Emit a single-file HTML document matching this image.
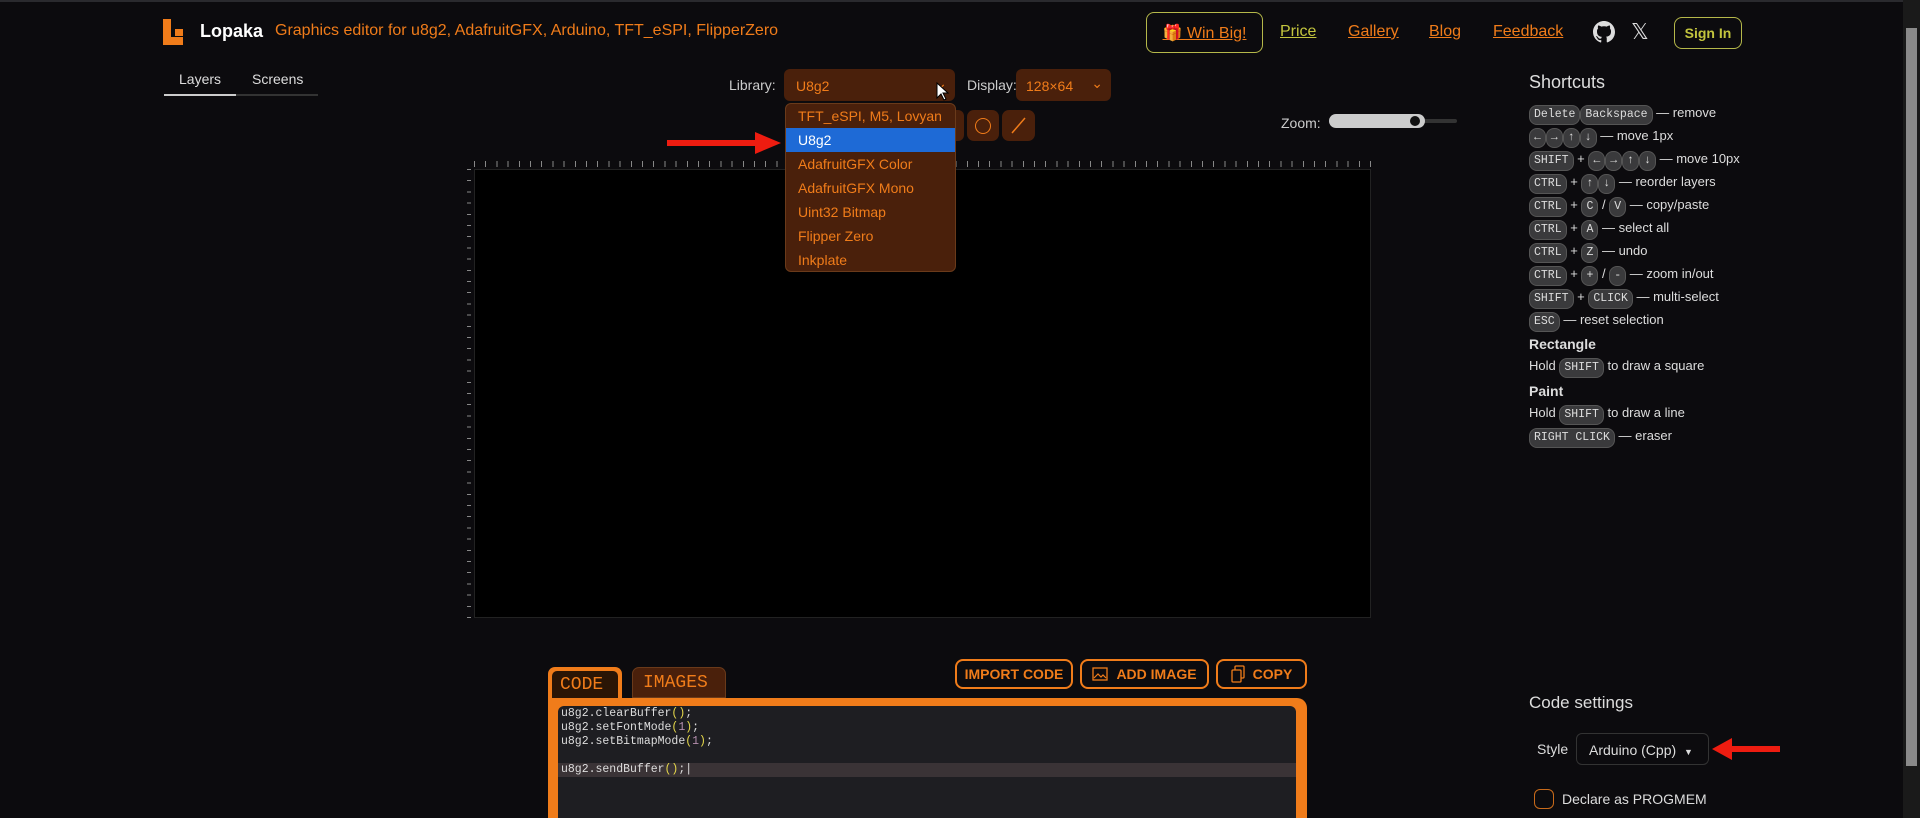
<!DOCTYPE html>
<html style="overflow:hidden;height:818px"><head><meta charset="utf-8"><style>
*{box-sizing:border-box;margin:0;padding:0}
body{width:1920px;height:818px;background:#0c0b0e;font-family:"Liberation Sans",sans-serif;color:#ddd;position:relative;overflow:hidden}
.a{position:absolute}
.or{color:#f07c1a}
a{color:#f07c1a;text-decoration:underline}
.kb{display:inline-block;font-family:"Liberation Mono",monospace;font-size:11.5px;background:#3a3a3c;border:1px solid #555;border-radius:8px;padding:2px 4px;color:#ddd;line-height:14px}
.row{position:absolute;left:1529px;font-size:13px;color:#ddd;white-space:nowrap}
.dd div{height:24px;line-height:24px;padding-left:12px;color:#f07c1a;font-size:14px}
.btn{position:absolute;border:2px solid #f07c1a;border-radius:8px;color:#f07c1a;font-weight:bold;font-size:14px;display:flex;align-items:center;justify-content:center;gap:8px;background:#0c0b0e}
</style></head><body>
<div class="a" style="left:0;top:0;width:1920px;height:2px;background:#2a2a2e"></div>
<div class="a" style="left:1903px;top:0;width:17px;height:818px;background:#1a1a1a"></div>
<div class="a" style="left:1906px;top:28px;width:11px;height:738px;background:#8a8a8a"></div>
<svg class="a" style="left:163px;top:19px" width="26" height="26"><rect x="0" y="0" width="8" height="26" fill="#f07c1a"/><rect x="0" y="18" width="20" height="8" fill="#f07c1a"/><rect x="12" y="10" width="8" height="7" fill="#f07c1a"/></svg>
<div class="a" style="left:200px;top:21px;font-size:18px;font-weight:bold;color:#fff">Lopaka</div>
<div class="a or" style="left:275px;top:22px;font-size:16px">Graphics editor for u8g2, AdafruitGFX, Arduino, TFT_eSPI, FlipperZero</div>
<div class="a" style="left:1146px;top:12px;width:117px;height:41px;border:1.5px solid #b5b84a;border-radius:8px;display:flex;align-items:center;justify-content:center;font-size:16px"><a>🎁 Win Big!</a></div>
<a class="a" style="left:1280px;top:23px;font-size:16px;color:#c3c53e">Price</a>
<a class="a" style="left:1348px;top:23px;font-size:16px">Gallery</a>
<a class="a" style="left:1429px;top:23px;font-size:16px">Blog</a>
<a class="a" style="left:1493px;top:23px;font-size:16px">Feedback</a>
<svg class="a" style="left:1593px;top:21px" width="22" height="22" viewBox="0 0 16 16"><path fill="#ddd" d="M8 0C3.6 0 0 3.6 0 8c0 3.5 2.3 6.5 5.5 7.6.4.1.5-.2.5-.4v-1.4c-2.2.5-2.7-1-2.7-1-.4-.9-.9-1.2-.9-1.2-.7-.5.1-.5.1-.5.8.1 1.2.8 1.2.8.7 1.3 1.9.9 2.3.7.1-.5.3-.9.5-1.1-1.8-.2-3.6-.9-3.6-4 0-.9.3-1.6.8-2.1-.1-.2-.4-1 .1-2.1 0 0 .7-.2 2.2.8.6-.2 1.3-.3 2-.3s1.4.1 2 .3c1.5-1 2.2-.8 2.2-.8.4 1.1.2 1.9.1 2.1.5.6.8 1.3.8 2.1 0 3.1-1.9 3.7-3.6 3.9.3.3.5.8.5 1.5v2.2c0 .2.1.5.6.4C13.7 14.5 16 11.5 16 8c0-4.4-3.6-8-8-8z"/></svg>
<div class="a" style="left:1631px;top:19px;font-size:22px;color:#ddd">𝕏</div>
<div class="a" style="left:1674px;top:17px;width:68px;height:32px;border:1.5px solid #b5b84a;border-radius:8px;color:#c3c53e;font-weight:bold;font-size:14px;display:flex;align-items:center;justify-content:center">Sign In</div>
<div class="a" style="left:179px;top:71px;font-size:14px">Layers</div>
<div class="a" style="left:252px;top:71px;font-size:14px">Screens</div>
<div class="a" style="left:164px;top:94px;width:154px;height:2px;background:#333"></div>
<div class="a" style="left:164px;top:94px;width:72px;height:2px;background:#ccc"></div>
<div class="a" style="left:729px;top:77px;font-size:14px;color:#ccc">Library:</div>
<div class="a" style="left:784px;top:69px;width:171px;height:32px;background:#4a200b;border-radius:6px;color:#f07c1a;font-size:14px;padding:9px 12px">U8g2<span style="position:absolute;right:8px;top:6px">⌄</span></div>
<div class="a" style="left:967px;top:77px;font-size:14px;color:#ccc">Display:</div>
<div class="a" style="left:1016px;top:69px;width:95px;height:32px;background:#4a200b;border-radius:6px;color:#f07c1a;font-size:14px;padding:9px 10px">128×64<span style="position:absolute;right:8px;top:6px">⌄</span></div>
<svg class="a" style="left:936px;top:82px" width="14" height="20"><path d="M1 1v15l4-4 3 6 2-1-3-6h5z" fill="#fff" stroke="#000"/></svg>
<div class="a" style="left:950px;top:110px;width:14px;height:31px;background:#4a200b;border-radius:6px"></div>
<div class="a" style="left:967px;top:110px;width:32px;height:31px;background:#4a200b;border-radius:7px"><div class="a" style="left:8px;top:8px;width:16px;height:16px;border:1.5px solid #f07c1a;border-radius:50%"></div></div>
<div class="a" style="left:1002px;top:110px;width:33px;height:31px;background:#4a200b;border-radius:7px"><svg width="33" height="31"><line x1="10" y1="23" x2="23" y2="8" stroke="#f07c1a" stroke-width="1.5"/></svg></div>
<div class="a" style="left:1281px;top:115px;font-size:14px;color:#ccc">Zoom:</div>
<div class="a" style="left:1329px;top:119px;width:128px;height:4px;background:#333;border-radius:2px"></div>
<div class="a" style="left:1329px;top:114px;width:96px;height:14px;background:#ccc;border-radius:7px"></div>
<div class="a" style="left:1408px;top:114px;width:14px;height:14px;background:#111;border:2px solid #ccc;border-radius:50%"></div>
<div class="a" style="left:474px;top:161px;width:897px;height:6px;background:repeating-linear-gradient(90deg,#888 0 1px,transparent 1px 11.2px)"></div>
<div class="a" style="left:467px;top:169px;width:4px;height:449px;background:repeating-linear-gradient(180deg,#888 0 1px,transparent 1px 11.2px)"></div>
<div class="a" style="left:474px;top:169px;width:897px;height:449px;background:#000;border:1px solid #222"></div>
<div class="a dd" style="left:785px;top:103px;width:171px;height:169px;background:#4a200b;border:1px solid #6a3a1a;border-radius:6px">
<div>TFT_eSPI, M5, Lovyan</div>
<div style="background:#1e6ad6;color:#fff">U8g2</div>
<div>AdafruitGFX Color</div>
<div>AdafruitGFX Mono</div>
<div>Uint32 Bitmap</div>
<div>Flipper Zero</div>
<div>Inkplate</div>
</div>
<svg class="a" style="left:667px;top:130px" width="116" height="26"><rect x="0" y="10" width="90" height="6" fill="#ee1c10"/><path d="M88 2 L114 13 L88 24z" fill="#ee1c10"/></svg>
<div class="a" style="left:1529px;top:72px;font-size:18px;color:#ddd">Shortcuts</div>
<div class="row" style="top:105px"><span class="kb">Delete</span><span class="kb">Backspace</span> — remove</div>
<div class="row" style="top:128px"><span class="kb">←</span><span class="kb">→</span><span class="kb">↑</span><span class="kb">↓</span> — move 1px</div>
<div class="row" style="top:151px"><span class="kb">SHIFT</span> + <span class="kb">←</span><span class="kb">→</span><span class="kb">↑</span><span class="kb">↓</span> — move 10px</div>
<div class="row" style="top:174px"><span class="kb">CTRL</span> + <span class="kb">↑</span><span class="kb">↓</span> — reorder layers</div>
<div class="row" style="top:197px"><span class="kb">CTRL</span> + <span class="kb">C</span> / <span class="kb">V</span> — copy/paste</div>
<div class="row" style="top:220px"><span class="kb">CTRL</span> + <span class="kb">A</span> — select all</div>
<div class="row" style="top:243px"><span class="kb">CTRL</span> + <span class="kb">Z</span> — undo</div>
<div class="row" style="top:266px"><span class="kb">CTRL</span> + <span class="kb">+</span> / <span class="kb">-</span> — zoom in/out</div>
<div class="row" style="top:289px"><span class="kb">SHIFT</span> + <span class="kb">CLICK</span> — multi-select</div>
<div class="row" style="top:312px"><span class="kb">ESC</span> — reset selection</div>
<div class="row" style="top:336px;font-weight:bold;font-size:14px">Rectangle</div>
<div class="row" style="top:358px">Hold <span class="kb">SHIFT</span> to draw a square</div>
<div class="row" style="top:383px;font-weight:bold;font-size:14px">Paint</div>
<div class="row" style="top:405px">Hold <span class="kb">SHIFT</span> to draw a line</div>
<div class="row" style="top:428px"><span class="kb">RIGHT CLICK</span> — eraser</div>
<div class="a" style="left:548px;top:667px;width:74px;height:36px;background:#f07c1a;border-radius:7px 7px 0 0"></div>
<div class="a" style="left:552px;top:671px;width:66px;height:30px;background:#2a1505;border-radius:5px 5px 0 0;color:#f07c1a;font-family:'Liberation Mono',monospace;font-size:18px;padding:4px 8px">CODE</div>
<div class="a" style="left:632px;top:667px;width:94px;height:31px;background:#4a200b;border:1px solid #6a3a1a;border-radius:7px 7px 0 0;color:#f07c1a;font-family:'Liberation Mono',monospace;font-size:18px;padding:5px 10px">IMAGES</div>
<div class="btn" style="left:955px;top:659px;width:118px;height:30px">IMPORT CODE</div>
<div class="btn" style="left:1080px;top:659px;width:129px;height:30px"><svg width="16" height="14"><rect x="1" y="1" width="14" height="12" fill="none" stroke="#f07c1a" stroke-width="1.3"/><path d="M2 11l4-4 3 3 2-2 3 3" fill="none" stroke="#f07c1a" stroke-width="1.2"/></svg>ADD IMAGE</div>
<div class="btn" style="left:1216px;top:659px;width:91px;height:30px"><svg width="14" height="18"><rect x="4" y="1" width="9" height="12" rx="1" fill="none" stroke="#f07c1a" stroke-width="1.3"/><rect x="1" y="5" width="9" height="12" rx="1" fill="#0c0b0e" stroke="#f07c1a" stroke-width="1.3"/></svg>COPY</div>
<div class="a" style="left:548px;top:698px;width:759px;height:120px;background:#f07c1a;border-radius:0 10px 0 0"></div>
<div class="a" style="left:558px;top:706px;width:738px;height:112px;background:#1e1e22;border-radius:6px 6px 0 0;font-family:'Liberation Mono',monospace;font-size:11.5px;line-height:14px;color:#ddd;padding:0 3px">
<div style="padding-top:1px">u8g2.clearBuffer<span style="color:#e6d84a">()</span>;</div>
<div>u8g2.setFontMode<span style="color:#e6d84a">(</span><span style="color:#b48ead">1</span><span style="color:#e6d84a">)</span>;</div>
<div>u8g2.setBitmapMode<span style="color:#e6d84a">(</span><span style="color:#b48ead">1</span><span style="color:#e6d84a">)</span>;</div>
<div>&nbsp;</div>
<div style="background:#3a3336;margin:0 -3px;padding:0 3px">u8g2.sendBuffer<span style="color:#e6d84a">()</span>;|</div>
</div>
<div class="a" style="left:1529px;top:693px;font-size:17px;color:#ddd">Code settings</div>
<div class="a" style="left:1537px;top:741px;font-size:14px;color:#ddd">Style</div>
<div class="a" style="left:1576px;top:733px;width:133px;height:32px;border:1px solid #333;border-radius:6px;font-size:14px;color:#ddd;padding:8px 12px">Arduino (Cpp) &nbsp;<span style="font-size:9px">▼</span></div>
<svg class="a" style="left:1712px;top:737px" width="68" height="24"><path d="M0 12 L20 1 L20 23z" fill="#ee1c10"/><rect x="18" y="9" width="50" height="6" fill="#ee1c10"/></svg>
<div class="a" style="left:1534px;top:789px;width:20px;height:20px;border:1.5px solid #c86a1a;border-radius:6px"></div>
<div class="a" style="left:1562px;top:791px;font-size:14px;color:#ddd">Declare as PROGMEM</div>
</body></html>
